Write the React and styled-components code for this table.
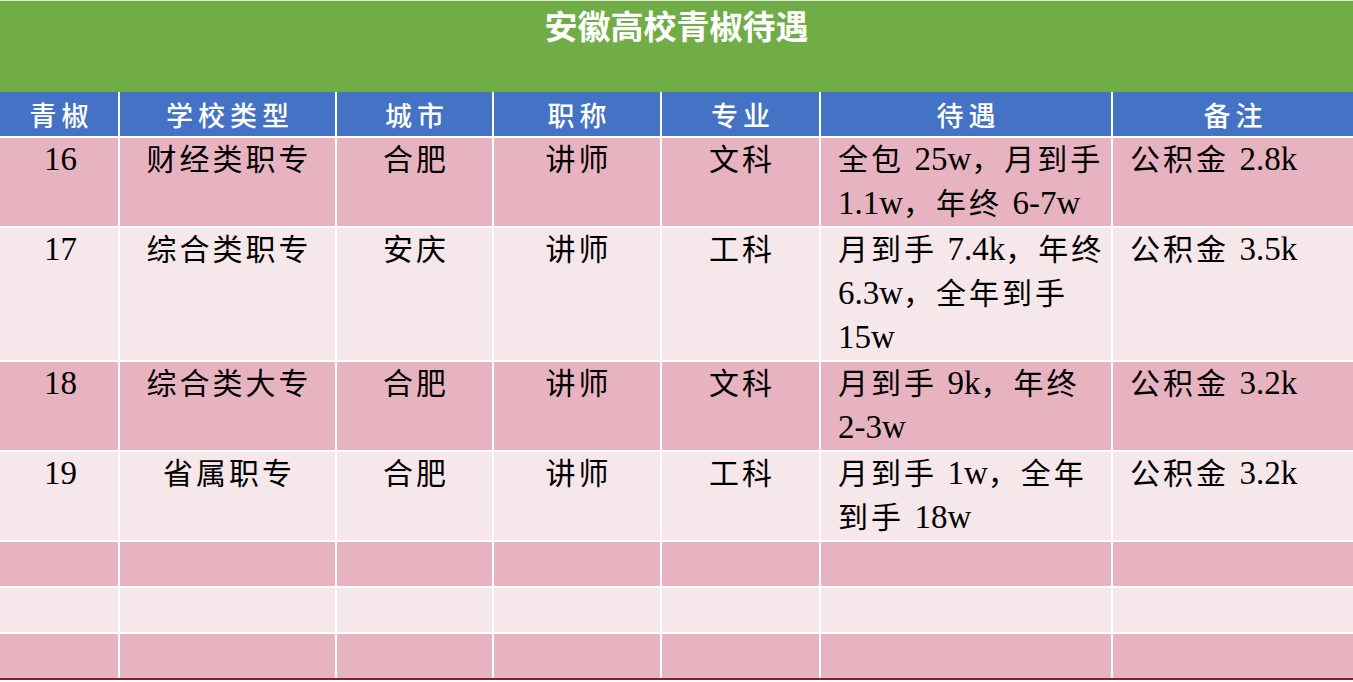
import React from "react";
import styled, { createGlobalStyle } from "styled-components";

const GlobalStyle = createGlobalStyle`
    html, body {
        margin: 0;
        padding: 0;
        background: #ffffff;
    }
    body {
        font-family: "Liberation Serif", "Noto Sans CJK SC", serif;
    }
`;

const Page = styled.div`
    width: 1353px;
    height: 682px;
    overflow: hidden;
    background: #ffffff;
`;

const TitleBar = styled.div`
    height: 92px;
    border-top: 1px solid #dfe7d6;
    background: #70ad47;
    display: flex;
    justify-content: center;
    align-items: flex-start;
    padding-top: 5px;
    box-sizing: border-box;
    color: #ffffff;
    font-family: "Noto Sans CJK SC", sans-serif;
    font-size: 33px;
    font-weight: 600;
    line-height: 38px;
`;

const Table = styled.div`
    display: grid;
    grid-template-columns: 118px 215px 155px 166px 157px 290px 1fr;
    column-gap: 2px;
    row-gap: 2px;
    background: #ffffff;
    border-bottom: 2px solid #7e2236;
`;

const HeadCell = styled.div`
    height: 44px;
    background: #4472c4;
    color: #ffffff;
    display: flex;
    align-items: center;
    justify-content: center;
    font-family: "Noto Sans CJK SC", sans-serif;
    font-size: 27px;
    font-weight: 500;
    letter-spacing: 5px;
    padding-left: 5px;
`;

const Cell = styled.div`
    min-height: 44px;
    background: ${(p) => (p.$dark ? "#e8b3c0" : "#f6e7eb")};
    color: #000000;
    font-size: 30px;
    line-height: 44px;
    letter-spacing: 3px;
    text-align: ${(p) => (p.$left ? "left" : "center")};
    padding-left: ${(p) => (p.$left ? "17px" : "3px")};
    white-space: nowrap;
`;

const Latin = styled.span`
    font-family: "Liberation Serif", serif;
    font-size: 33px;
    line-height: 0;
    letter-spacing: 0;
`;

const heads = ["青椒", "学校类型", "城市", "职称", "专业", "待遇", "备注"];

const rows = [
    { no: "16", type: "财经类职专", city: "合肥", title: "讲师", major: "文科", pay: ["全包 25w，月到手", "1.1w，年终 6-7w"], note: "公积金 2.8k" },
    { no: "17", type: "综合类职专", city: "安庆", title: "讲师", major: "工科", pay: ["月到手 7.4k，年终", "6.3w，全年到手", "15w"], note: "公积金 3.5k" },
    { no: "18", type: "综合类大专", city: "合肥", title: "讲师", major: "文科", pay: ["月到手 9k，年终", "2-3w"], note: "公积金 3.2k" },
    { no: "19", type: "省属职专", city: "合肥", title: "讲师", major: "工科", pay: ["月到手 1w，全年", "到手 18w"], note: "公积金 3.2k" },
    null,
    null,
    null,
];

// latin runs get the bigger serif, CJK keeps the spaced-out look
function Mixed({ text }) {
    return text.split(/([A-Za-z0-9.\-]+)/).map((part, i) =>
        /^[A-Za-z0-9.\-]+$/.test(part) ? <Latin key={i}>{part}</Latin> : <React.Fragment key={i}>{part}</React.Fragment>
    );
}

export default function App() {
    return (
        <>
            <GlobalStyle />
            <Page>
                <TitleBar>安徽高校青椒待遇</TitleBar>
                <Table>
                    {heads.map((h) => (
                        <HeadCell key={h}>{h}</HeadCell>
                    ))}
                    {rows.map((r, i) => {
                        const dark = i % 2 === 0;
                        if (!r) {
                            return heads.map((h) => <Cell key={i + h} $dark={dark} />);
                        }
                        return (
                            <React.Fragment key={r.no}>
                                <Cell $dark={dark}>
                                    <Mixed text={r.no} />
                                </Cell>
                                <Cell $dark={dark}>{r.type}</Cell>
                                <Cell $dark={dark}>{r.city}</Cell>
                                <Cell $dark={dark}>{r.title}</Cell>
                                <Cell $dark={dark}>{r.major}</Cell>
                                <Cell $dark={dark} $left>
                                    {r.pay.map((line) => (
                                        <div key={line}>
                                            <Mixed text={line} />
                                        </div>
                                    ))}
                                </Cell>
                                <Cell $dark={dark} $left>
                                    <Mixed text={r.note} />
                                </Cell>
                            </React.Fragment>
                        );
                    })}
                </Table>
            </Page>
        </>
    );
}
